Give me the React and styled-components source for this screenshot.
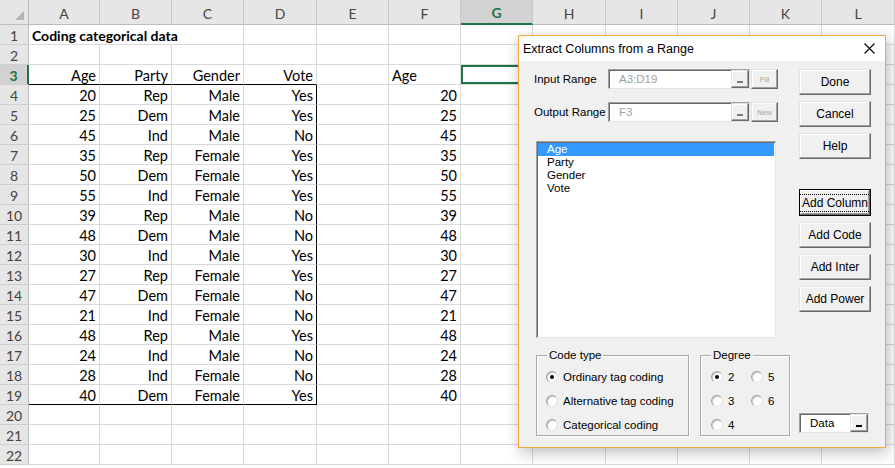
import React from 'react';
import styled, { createGlobalStyle, css } from 'styled-components';

const GlobalStyle = createGlobalStyle`
  html, body {
    margin: 0;
    padding: 0;
    background: #ffffff;
    overflow: hidden;
  }
  #root {
    width: 895px;
    height: 468px;
  }
`;

const colWidths = [71, 72, 72, 73, 72, 72, 72, 73, 72, 72, 72, 73];
const colNames = ['A', 'B', 'C', 'D', 'E', 'F', 'G', 'H', 'I', 'J', 'K', 'L'];

const records = [
  [20, 'Rep', 'Male', 'Yes'],
  [25, 'Dem', 'Male', 'Yes'],
  [45, 'Ind', 'Male', 'No'],
  [35, 'Rep', 'Female', 'Yes'],
  [50, 'Dem', 'Female', 'Yes'],
  [55, 'Ind', 'Female', 'Yes'],
  [39, 'Rep', 'Male', 'No'],
  [48, 'Dem', 'Male', 'No'],
  [30, 'Ind', 'Male', 'Yes'],
  [27, 'Rep', 'Female', 'Yes'],
  [47, 'Dem', 'Female', 'No'],
  [21, 'Ind', 'Female', 'No'],
  [48, 'Rep', 'Male', 'Yes'],
  [24, 'Ind', 'Male', 'No'],
  [28, 'Ind', 'Female', 'No'],
  [40, 'Dem', 'Female', 'Yes'],
];

// builds the content of one row of the sheet (index 0 = column A)
const rowCells = (row) => {
  const cells = Array(12).fill(null).map(() => ({ text: '', align: 'left' }));
  if (row === 1) {
    cells[0] = { text: 'Coding categorical data', bold: true, overflow: true };
    cells[1] = { text: '', overflow: true };
  }
  if (row === 3) {
    ['Age', 'Party', 'Gender', 'Vote'].forEach((t, i) => {
      cells[i] = { text: t, align: 'right', bottomLine: true };
    });
    cells[5] = { text: 'Age', align: 'left' };
    cells[6] = { text: '', selected: true };
  }
  if (row >= 4 && row <= 19) {
    const rec = records[row - 4];
    rec.forEach((v, i) => {
      cells[i] = { text: v, align: 'right', bottomLine: row === 19, rightLine: i === 3 };
    });
    cells[5] = { text: rec[0], align: 'right' };
  }
  return cells;
};

const Sheet = styled.div`
  display: grid;
  grid-template-columns: 29px ${colWidths.map((w) => `${w}px`).join(' ')};
  grid-template-rows: 25px repeat(22, 20px);
  font-family: Lato, "Liberation Sans", sans-serif;
  font-size: 14px;
  color: #000;
`;

const Corner = styled.div`
  background: #e6e6e6;
  border-right: 1px solid #bcbcbc;
  border-bottom: 1px solid #bcbcbc;
  box-sizing: border-box;
  display: flex;
  justify-content: flex-end;
  align-items: flex-end;
  padding: 0 4px 4px 0;
`;

const CornerTriangle = styled.span`
  width: 0;
  height: 0;
  border-left: 9px solid transparent;
  border-bottom: 9px solid #b4b4b4;
`;

const ColHeader = styled.div`
  box-sizing: border-box;
  display: flex;
  align-items: center;
  justify-content: center;
  padding-top: 2px;
  background: ${(p) => (p.$active ? '#d2d2d2' : '#e6e6e6')};
  color: ${(p) => (p.$active ? '#217346' : '#444')};
  font-weight: ${(p) => (p.$active ? 700 : 400)};
  border-right: 1px solid #c8c8c8;
  border-bottom: ${(p) => (p.$active ? '2px solid #217346' : '1px solid #bcbcbc')};
`;

const RowHeader = styled.div`
  box-sizing: border-box;
  display: flex;
  align-items: center;
  justify-content: center;
  padding-top: 1px;
  background: ${(p) => (p.$active ? '#d2d2d2' : '#e6e6e6')};
  color: ${(p) => (p.$active ? '#217346' : '#444')};
  font-weight: ${(p) => (p.$active ? 700 : 400)};
  border-right: ${(p) => (p.$active ? '2px solid #217346' : '1px solid #bcbcbc')};
  border-bottom: 1px solid #cfcfcf;
`;

const Cell = styled.div`
  box-sizing: border-box;
  padding: 1px 3px 0;
  line-height: 19px;
  font-size: 14.5px;
  white-space: nowrap;
  text-align: ${(p) => p.$align};
  font-weight: ${(p) => (p.$bold ? 700 : 400)};
  overflow: ${(p) => (p.$overflow ? 'visible' : 'hidden')};
  border-right: 1px solid ${(p) => (p.$overflow ? 'transparent' : p.$rightLine ? '#000' : '#dadada')};
  border-bottom: 1px solid ${(p) => (p.$bottomLine ? '#000' : '#dadada')};
  ${(p) =>
    p.$bold &&
    css`
      font-size: 14px;
    `}
  ${(p) =>
    p.$selected &&
    css`
      box-shadow: inset 0 0 0 2px #217346;
    `}
`;

const Dialog = styled.div`
  position: absolute;
  left: 518px;
  top: 35px;
  width: 368px;
  height: 413px;
  box-sizing: border-box;
  border: 1px solid #f2a93b;
  background: #f0f0f0;
  box-shadow: 2px 4px 14px rgba(0, 0, 0, 0.28);
  font-family: "Liberation Sans", Arial, sans-serif;
  font-size: 11px;
  color: #000;
  display: flex;
  flex-direction: column;
`;

const TitleBar = styled.div`
  height: 25px;
  background: #ffffff;
  display: flex;
  align-items: center;
  justify-content: space-between;
  padding: 0 10px 0 4px;
`;

const Title = styled.span`
  font-size: 12.5px;
  color: #000;
`;

const Body = styled.div`
  padding: 8px 0 0 15px;
  display: flex;
  flex-direction: column;
`;

const TopArea = styled.div`
  display: flex;
  gap: 21px;
`;

const LeftStack = styled.div`
  width: 244px;
  display: flex;
  flex-direction: column;
`;

const RangeRow = styled.div`
  display: flex;
  align-items: center;
  height: 20px;
  margin-bottom: 13px;
`;

const FieldLabel = styled.span`
  width: 74px;
  font-size: 11.5px;
`;

const sunken = css`
  box-sizing: border-box;
  background: #ffffff;
  border: 1px solid;
  border-color: #a0a0a0 #e3e3e3 #e3e3e3 #a0a0a0;
  box-shadow: inset 1px 1px 0 #696969;
`;

const raised = css`
  box-sizing: border-box;
  background: #f0f0f0;
  border: 1px solid;
  border-color: #e3e3e3 #696969 #696969 #e3e3e3;
  box-shadow: inset -1px -1px 0 #a0a0a0, inset 1px 1px 0 #ffffff;
`;

const RangeBox = styled.div`
  ${sunken}
  width: 142px;
  height: 20px;
  display: flex;
  align-items: center;
  justify-content: space-between;
  padding-left: 10px;
  color: #a0a0a0;
  font-size: 11.5px;
`;

const PickButton = styled.span`
  ${raised}
  width: 18px;
  height: 18px;
  display: flex;
  align-items: flex-end;
  justify-content: center;
  padding-bottom: 4px;
  &::after {
    content: '';
    width: 6px;
    height: 2px;
    background: ${(p) => (p.$dark ? '#000' : '#7a7a7a')};
  }
`;

const SmallButton = styled.span`
  ${raised}
  margin-left: 1px;
  width: 27px;
  height: 20px;
  display: flex;
  align-items: center;
  justify-content: center;
  font-size: 7.5px;
  color: #a6a6a6;
`;

const ListBox = styled.div`
  ${sunken}
  margin: 6px 0 0 2px;
  width: 240px;
  height: 197px;
  padding: 1px 1px;
  display: flex;
  flex-direction: column;
`;

const ListItem = styled.div`
  height: 13px;
  line-height: 13px;
  padding-left: 9px;
  font-size: 11.5px;
  background: ${(p) => (p.$selected ? '#3399ff' : 'transparent')};
  color: ${(p) => (p.$selected ? '#ffffff' : '#000')};
`;

const ButtonStack = styled.div`
  width: 72px;
  display: flex;
  flex-direction: column;
  gap: 6px;
`;

const CmdButton = styled.div`
  ${raised}
  height: 26px;
  display: flex;
  align-items: center;
  justify-content: center;
  font-size: 12px;
  margin-top: ${(p) => p.$gapBefore || 0}px;
  ${(p) =>
    p.$default &&
    css`
      border: 1px solid #000;
      height: 27px;
      box-shadow: inset -1px -1px 0 #696969, inset 1px 1px 0 #ffffff, inset -2px -2px 0 #a0a0a0;
    `}
`;

const FocusText = styled.span`
  outline: 1px dotted #000;
  outline-offset: 1px;
  padding: 0 1px;
`;

const BottomArea = styled.div`
  display: flex;
  align-items: flex-end;
  margin: 17px 0 0 2px;
`;

const GroupBox = styled.div`
  position: relative;
  box-sizing: border-box;
  width: ${(p) => p.$width}px;
  height: 81px;
  margin-right: ${(p) => p.$gapAfter}px;
  border: 1px solid #a9a9a9;
  box-shadow: inset 1px 1px 0 #ffffff, 1px 1px 0 #ffffff;
  padding: 9px 0 0 ${(p) => p.$padLeft}px;
`;

const Legend = styled.span`
  position: absolute;
  top: -8px;
  left: 10px;
  padding: 0 2px;
  background: #f0f0f0;
  font-size: 11.5px;
  line-height: 14px;
`;

const RadioList = styled.div`
  display: grid;
  grid-template-rows: repeat(3, 24px);
  grid-auto-flow: column;
  grid-auto-columns: ${(p) => p.$colWidth};
`;

const RadioRow = styled.div`
  display: flex;
  align-items: center;
  gap: 5px;
  font-size: 11.5px;
`;

const RadioDot = styled.span`
  box-sizing: border-box;
  width: 12px;
  height: 12px;
  border-radius: 50%;
  background: #ffffff;
  border: 1px solid;
  border-color: #a0a0a0 #e3e3e3 #e3e3e3 #a0a0a0;
  box-shadow: inset 1px 1px 0 #c8c8c8;
  display: flex;
  align-items: center;
  justify-content: center;
  &::after {
    content: '';
    width: 4px;
    height: 4px;
    border-radius: 50%;
    background: ${(p) => (p.$checked ? '#000' : 'transparent')};
  }
`;

const DataBox = styled.div`
  ${sunken}
  width: 70px;
  height: 20px;
  margin-bottom: 3px;
  display: flex;
  align-items: center;
  justify-content: space-between;
  padding-left: 10px;
  font-size: 11.5px;
`;

const CloseIcon = () => (
  <svg width="11" height="11" viewBox="0 0 11 11">
    <path d="M0.5 0.5 L10.5 10.5 M10.5 0.5 L0.5 10.5" stroke="#000" strokeWidth="1.1" />
  </svg>
);

const Radio = ({ label, checked }) => (
  <RadioRow>
    <RadioDot $checked={checked} />
    <span>{label}</span>
  </RadioRow>
);

const App = () => {
  const rows = Array.from({ length: 22 }, (_, i) => i + 1);

  return (
    <>
      <GlobalStyle />
      <Sheet>
        <Corner>
          <CornerTriangle />
        </Corner>
        {colNames.map((c) => (
          <ColHeader key={c} $active={c === 'G'}>
            {c}
          </ColHeader>
        ))}
        {rows.map((r) => (
          <React.Fragment key={r}>
            <RowHeader $active={r === 3}>{r}</RowHeader>
            {rowCells(r).map((cell, i) => (
              <Cell
                key={i}
                $align={cell.align || 'left'}
                $bold={cell.bold}
                $overflow={cell.overflow}
                $bottomLine={cell.bottomLine}
                $rightLine={cell.rightLine}
                $selected={cell.selected}
              >
                {cell.text}
              </Cell>
            ))}
          </React.Fragment>
        ))}
      </Sheet>

      <Dialog>
        <TitleBar>
          <Title>Extract Columns from a Range</Title>
          <CloseIcon />
        </TitleBar>
        <Body>
          <TopArea>
            <LeftStack>
              <RangeRow>
                <FieldLabel>Input Range</FieldLabel>
                <RangeBox>
                  A3:D19
                  <PickButton />
                </RangeBox>
                <SmallButton>Fill</SmallButton>
              </RangeRow>
              <RangeRow>
                <FieldLabel>Output Range</FieldLabel>
                <RangeBox>
                  F3
                  <PickButton />
                </RangeBox>
                <SmallButton>New</SmallButton>
              </RangeRow>
              <ListBox>
                <ListItem $selected>Age</ListItem>
                <ListItem>Party</ListItem>
                <ListItem>Gender</ListItem>
                <ListItem>Vote</ListItem>
              </ListBox>
            </LeftStack>
            <ButtonStack>
              <CmdButton>Done</CmdButton>
              <CmdButton>Cancel</CmdButton>
              <CmdButton>Help</CmdButton>
              <CmdButton $default $gapBefore={24}>
                <FocusText>Add Column</FocusText>
              </CmdButton>
              <CmdButton>Add Code</CmdButton>
              <CmdButton>Add Inter</CmdButton>
              <CmdButton>Add Power</CmdButton>
            </ButtonStack>
          </TopArea>
          <BottomArea>
            <GroupBox $width={153} $gapAfter={11} $padLeft={9}>
              <Legend>Code type</Legend>
              <RadioList $colWidth="140px">
                <Radio label="Ordinary tag coding" checked />
                <Radio label="Alternative tag coding" />
                <Radio label="Categorical coding" />
              </RadioList>
            </GroupBox>
            <GroupBox $width={90} $gapAfter={9} $padLeft={10}>
              <Legend>Degree</Legend>
              <RadioList $colWidth="40px">
                <Radio label="2" checked />
                <Radio label="3" />
                <Radio label="4" />
                <Radio label="5" />
                <Radio label="6" />
              </RadioList>
            </GroupBox>
            <DataBox>
              Data
              <PickButton $dark />
            </DataBox>
          </BottomArea>
        </Body>
      </Dialog>
    </>
  );
};

export default App;
